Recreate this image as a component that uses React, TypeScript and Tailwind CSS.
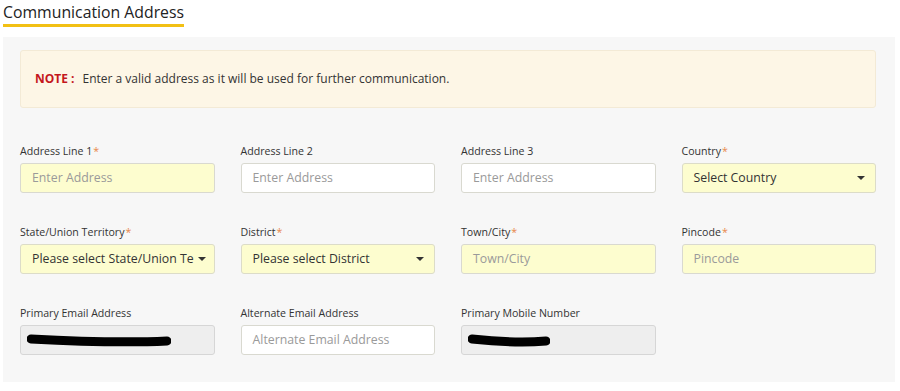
import React from 'react';

const font = { fontFamily: '"Open Sans", "Noto Sans", sans-serif' };

type Field = {
  label: string;
  required?: boolean;
  kind: 'input' | 'select' | 'disabled';
  placeholder?: string;
  yellow?: boolean;
  redact?: number;
};

const rows: Field[][] = [
  [
    { label: 'Address Line 1', required: true, kind: 'input', placeholder: 'Enter Address', yellow: true },
    { label: 'Address Line 2', kind: 'input', placeholder: 'Enter Address' },
    { label: 'Address Line 3', kind: 'input', placeholder: 'Enter Address' },
    { label: 'Country', required: true, kind: 'select', placeholder: 'Select Country' },
  ],
  [
    { label: 'State/Union Territory', required: true, kind: 'select', placeholder: 'Please select State/Union Te' },
    { label: 'District', required: true, kind: 'select', placeholder: 'Please select District' },
    { label: 'Town/City', required: true, kind: 'input', placeholder: 'Town/City', yellow: true },
    { label: 'Pincode', required: true, kind: 'input', placeholder: 'Pincode', yellow: true },
  ],
  [
    { label: 'Primary Email Address', kind: 'disabled', redact: 138 },
    { label: 'Alternate Email Address', kind: 'input', placeholder: 'Alternate Email Address' },
    { label: 'Primary Mobile Number', kind: 'disabled', redact: 76 },
  ],
];

function FieldBox({ f }: { f: Field }) {
  return (
    <div className="flex flex-col">
      <div className="h-[16px] text-[10.6px] leading-[16px] text-[#333] mb-[4px]">
        {f.label}
        {f.required && <span className="text-[#e8874a] ml-[1px]">*</span>}
      </div>
      {f.kind === 'input' && (
        <div
          className={`h-[30px] rounded-[3px] border border-[#d9d9d0] flex items-center px-[11px] text-[12.3px] text-[#9a9a9a] ${
            f.yellow ? 'bg-[#fdfdcf]' : 'bg-white'
          }`}
        >
          {f.placeholder}
        </div>
      )}
      {f.kind === 'select' && (
        <div className="h-[30px] rounded-[3px] border border-[#dcdcc8] bg-[#fdfdcf] flex items-center pl-[11px] pr-[10px] text-[12.3px] text-[#333]">
          <span className="flex-1 whitespace-nowrap">{f.placeholder}</span>
          <span className="ml-[4px] w-0 h-0 border-l-[4px] border-r-[4px] border-t-[4px] border-l-transparent border-r-transparent border-t-[#333]" />
        </div>
      )}
      {f.kind === 'disabled' && (
        <div className="h-[30px] rounded-[3px] border border-[#d6d6d6] bg-[#eeeeee] flex items-center px-[6px]">
          <svg width={f.redact! + 6} height="14" viewBox={`0 0 ${f.redact! + 6} 14`}>
            <path
              d={`M4 6 C ${f.redact! * 0.3} 8, ${f.redact! * 0.7} 10, ${f.redact! + 2} 8`}
              stroke="#000"
              strokeWidth="9"
              strokeLinecap="round"
              fill="none"
            />
          </svg>
        </div>
      )}
    </div>
  );
}

export default function App() {
  return (
    <div className="w-[900px] h-[391px] bg-white" style={font}>
      <div className="pl-[3px]">
        <div className="inline-block">
          <h2 className="text-[15.8px] leading-[20px] text-[#222] font-normal">Communication Address</h2>
          <div className="h-[3px] bg-[#f2c014] mt-[2px]" />
        </div>
      </div>
      <div className="mt-[10px] ml-[3px] w-[892px] bg-[#f7f7f7] pt-[13px] pl-[17px] pr-[19px] pb-[27px]">
        <div className="h-[58px] rounded-[3px] border border-[#f3ead6] bg-[#fdf6e6] flex items-center pl-[14px] text-[12px] text-[#333]">
          <span className="text-[#c4161c] font-bold mr-[8px]">NOTE :</span>
          Enter a valid address as it will be used for further communication.
        </div>
        <div className="mt-[35px] flex flex-col gap-[31px]">
          {rows.map((r, i) => (
            <div key={i} className="grid grid-cols-4 gap-x-[26px]">
              {r.map((f, j) => (
                <FieldBox key={j} f={f} />
              ))}
            </div>
          ))}
        </div>
      </div>
    </div>
  );
}
